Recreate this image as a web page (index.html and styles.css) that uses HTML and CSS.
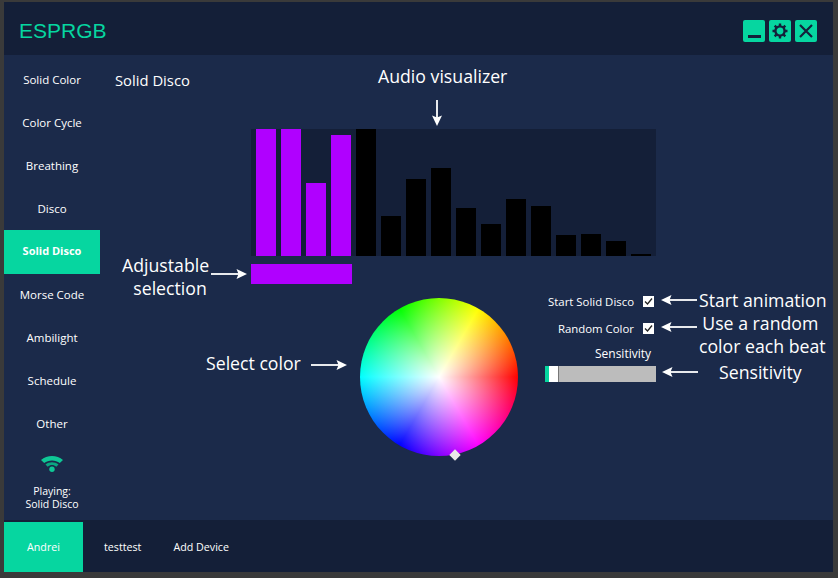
FILE: index.html
```html
<!DOCTYPE html>
<html lang="en">
<head>
  <meta charset="UTF-8" />
  <title>ESPRGB</title>
  <link rel="stylesheet" href="styles.css">
</head>
<body>
  <div class="app">
    <header class="titlebar">
      <div class="brand">ESPRGB</div>
      <div class="window-btns">
        <button class="win-btn" type="button"><svg viewBox="0 0 22 22" width="22" height="22"><rect x="5" y="15" width="13" height="3" fill="#14203a"/></svg></button>
        <button class="win-btn" type="button"><svg viewBox="0 0 22 22" width="22" height="22"><g stroke="#14203a" stroke-width="2.4" fill="none"><circle cx="11" cy="11" r="4.6"/><path d="M11 3.500v3M11 15.500v3M3.500 11h3M15.500 11h3M5.700 5.700l2.100 2.100M14.200 14.200l2.100 2.100M5.700 16.300l2.100-2.100M14.200 7.800l2.100-2.100"/></g></svg></button>
        <button class="win-btn" type="button"><svg viewBox="0 0 22 22" width="22" height="22"><path d="M5 5l12 12M17 5L5 17" stroke="#14203a" stroke-width="2.200" fill="none"/></svg></button>
      </div>
    </header>

    <div class="middle">
      <nav class="sidebar">
        <a class="nav-item">Solid Color</a>
        <a class="nav-item">Color Cycle</a>
        <a class="nav-item">Breathing</a>
        <a class="nav-item">Disco</a>
        <a class="nav-item active">Solid Disco</a>
        <a class="nav-item">Morse Code</a>
        <a class="nav-item">Ambilight</a>
        <a class="nav-item">Schedule</a>
        <a class="nav-item">Other</a>
        <div class="status">
          <svg viewBox="0 0 24 18" width="24" height="18"><path d="M1 6C7 .5 17 .5 23 6l-3.200 3C15.500 5.500 8.500 5.500 4.200 9z" fill="#0fc796"/><path d="M5.500 10.500C9 7.500 15 7.500 18.500 10.500L16.300 12.700C13.500 10.500 10.500 10.500 7.700 12.700z" fill="#0ba882"/><circle cx="12" cy="15.300" r="2.700" fill="#0fc796"/></svg>
          <p>Playing:<br>Solid Disco</p>
        </div>
      </nav>

      <main class="content">
        <h2 class="page-title">Solid Disco</h2>

        <div class="visualizer">
          <div class="bar on" style="height:127px"></div>
          <div class="bar on" style="height:127px"></div>
          <div class="bar on" style="height:73px"></div>
          <div class="bar on" style="height:121px"></div>
          <div class="bar" style="height:127px"></div>
          <div class="bar" style="height:40px"></div>
          <div class="bar" style="height:77px"></div>
          <div class="bar" style="height:88px"></div>
          <div class="bar" style="height:48px"></div>
          <div class="bar" style="height:32px"></div>
          <div class="bar" style="height:57px"></div>
          <div class="bar" style="height:50px"></div>
          <div class="bar" style="height:21px"></div>
          <div class="bar" style="height:22px"></div>
          <div class="bar" style="height:15px"></div>
          <div class="bar" style="height:2px"></div>
        </div>
        <div class="selection"></div>

        <div class="lower">
          <div class="wheel"><span class="wheel-handle"></span></div>
          <div class="controls">
            <label class="check-row">Start Solid Disco <span class="check"><svg viewBox="0 0 11 11" width="11" height="11"><path d="M2 5.500l2.500 2.500L9 2.500" stroke="#222" stroke-width="1.300" fill="none"/></svg></span></label>
            <label class="check-row">Random Color <span class="check"><svg viewBox="0 0 11 11" width="11" height="11"><path d="M2 5.500l2.500 2.500L9 2.500" stroke="#222" stroke-width="1.300" fill="none"/></svg></span></label>
            <div class="slider-label">Sensitivity</div>
            <div class="slider"><span class="slider-fill"></span><span class="slider-thumb"></span></div>
          </div>
        </div>
      </main>
    </div>

    <footer class="devices">
      <a class="device active">Andrei</a>
      <a class="device">testtest</a>
      <a class="device">Add Device</a>
    </footer>
  </div>

  <!-- annotations drawn over the screenshot -->
  <div class="note note-audio">Audio visualizer</div>
  <div class="note note-adjust">Adjustable<br><span class="nudge">selection</span></div>
  <div class="note note-select">Select color</div>
  <div class="note note-start">Start animation</div>
  <div class="note note-random">Use a random<br><span class="nudge-small">color each beat</span></div>
  <div class="note note-sens">Sensitivity</div>

  <svg class="arrow arrow-audio" viewBox="0 0 12 26" width="12" height="26"><path d="M6 0v20" stroke="#fff" stroke-width="1.800"/><path d="M1 15.500l5 2 5-2-5 10.500z" fill="#fff"/></svg>
  <svg class="arrow arrow-adjust" viewBox="0 0 36 12" width="36" height="12"><path d="M0 6h30" stroke="#fff" stroke-width="1.800"/><path d="M25.500 1l2 5-2 5L36 6z" fill="#fff"/></svg>
  <svg class="arrow arrow-select" viewBox="0 0 36 12" width="36" height="12"><path d="M0 6h30" stroke="#fff" stroke-width="1.800"/><path d="M25.500 1l2 5-2 5L36 6z" fill="#fff"/></svg>
  <svg class="arrow arrow-start" viewBox="0 0 36 12" width="36" height="12"><path d="M6 6h30" stroke="#fff" stroke-width="1.800"/><path d="M10.500 1l-2 5 2 5L0 6z" fill="#fff"/></svg>
  <svg class="arrow arrow-random" viewBox="0 0 36 12" width="36" height="12"><path d="M6 6h30" stroke="#fff" stroke-width="1.800"/><path d="M10.500 1l-2 5 2 5L0 6z" fill="#fff"/></svg>
  <svg class="arrow arrow-sens" viewBox="0 0 36 12" width="36" height="12"><path d="M6 6h30" stroke="#fff" stroke-width="1.800"/><path d="M10.500 1l-2 5 2 5L0 6z" fill="#fff"/></svg>
</body>
</html>
```

FILE: styles.css
```css
html, body {
  margin: 0;
  height: 100%;
}
body {
  background-color: #3a3a3a;
  font-family: "Open Sans", "Noto Sans", sans-serif;
  color: #fff;
  overflow: hidden;
  position: relative;
}
.app {
  margin: 2px 5px 0 4px;
  height: 570px;
  display: flex;
  flex-direction: column;
  background-color: #1b2a4a;
}

/* title bar */
.titlebar {
  height: 53px;
  box-sizing: border-box;
  background-color: #141f38;
  display: flex;
  align-items: center;
  justify-content: space-between;
  padding: 5px 16px 0 15px;
  flex-shrink: 0;
}
.brand {
  font-family: "Liberation Sans", Arial, sans-serif;
  font-size: 21px;
  color: #06d6a0;
}
.window-btns {
  display: flex;
  gap: 4px;
}
.win-btn {
  width: 22px;
  height: 22px;
  padding: 0;
  border: none;
  border-radius: 2px;
  background-color: #06d6a0;
}
.win-btn svg { display: block; }

/* middle */
.middle {
  flex: 1;
  display: flex;
  min-height: 0;
}
.sidebar {
  width: 96px;
  padding-top: 3px;
  flex-shrink: 0;
  display: flex;
  flex-direction: column;
}
.nav-item {
  height: 43px;
  display: flex;
  align-items: center;
  justify-content: center;
  font-size: 11.5px;
}
.nav-item.active {
  height: 44px;
  box-sizing: border-box;
  padding-bottom: 3px;
  margin-bottom: -1px;
  background-color: #06d6a0;
  font-weight: 700;
  font-size: 11px;
}
.status {
  text-align: center;
  font-size: 10.5px;
  line-height: 13px;
  margin-top: 9px;
}
.status svg { display: block; margin: 0 auto; }
.status p { margin: 13px 0 0; }

.content {
  flex: 1;
}
.page-title {
  margin: 0;
  padding: 14px 0 0 15px;
  height: 74px;
  box-sizing: border-box;
  font-size: 14.8px;
  font-weight: 400;
  line-height: 22px;
}

/* audio bars */
.visualizer {
  margin-left: 151px;
  width: 405px;
  height: 127px;
  box-sizing: border-box;
  padding-left: 5px;
  background-color: #141f38;
  display: flex;
  align-items: flex-end;
  gap: 5px;
}
.bar {
  width: 20px;
  background-color: #000;
}
.bar.on { background-color: #b000ff; }
.selection {
  margin: 8px 0 0 151px;
  width: 101px;
  height: 20px;
  background-color: #b000ff;
}

/* colour wheel and controls */
.lower {
  display: flex;
  margin-top: 14px;
  padding-left: 260px;
}
.wheel {
  width: 158px;
  height: 158px;
  border-radius: 50%;
  position: relative;
  background:
    radial-gradient(circle closest-side, #fff 0%, rgba(255,255,255,0) 100%),
    conic-gradient(from 90deg, #f00, #f0f, #00f, #0ff, #0f0, #ff0, #f00);
}
.wheel-handle {
  position: absolute;
  left: 91px;
  top: 153px;
  width: 8px;
  height: 8px;
  background-color: #e8e8e8;
  transform: rotate(45deg);
}
.controls {
  width: 111px;
  margin-left: 27px;
  margin-top: -10px;
  font-size: 11.4px;
}
.check-row {
  display: flex;
  align-items: center;
  justify-content: flex-end;
  gap: 9px;
  height: 27px;
  padding-right: 2px;
  white-space: nowrap;
}
.check {
  width: 11px;
  height: 11px;
  background-color: #fff;
  display: block;
}
.check svg { display: block; }
.slider-label {
  text-align: right;
  padding-right: 5px;
  margin-top: 4px;
  line-height: 15px;
  font-size: 12px;
}
.slider {
  margin-top: 5px;
  height: 16px;
  background-color: #bcbcbc;
  display: flex;
}
.slider-fill {
  width: 4px;
  background-color: #06d6a0;
}
.slider-thumb {
  width: 10px;
  box-sizing: border-box;
  background-color: #fff;
  border-right: 1px solid #777;
}

/* footer */
.devices {
  height: 50px;
  padding-top: 2px;
  background-color: #141f38;
  display: flex;
  flex-shrink: 0;
  font-size: 10.7px;
}
.device {
  display: flex;
  align-items: center;
  padding: 0 11px 1px 21px;
}
.device.active {
  width: 79px;
  box-sizing: border-box;
  padding: 0 0 1px;
  justify-content: center;
  background-color: #06d6a0;
}

/* annotations */
.note {
  position: absolute;
  font-size: 17.7px;
  line-height: 23px;
  text-align: center;
  white-space: nowrap;
}
.nudge {
  display: inline-block;
  margin-left: 9px;
}
.nudge-small {
  display: inline-block;
  margin-left: 4px;
}
.note-audio { left: 378px; top: 65px; }
.note-adjust { left: 122px; top: 254px; }
.note-select { left: 206px; top: 352px; }
.note-start { left: 699px; top: 289px; }
.note-random { left: 695px; top: 312px; }
.note-sens { left: 719px; top: 361px; }
.arrow {
  position: absolute;
}
.arrow-audio { left: 431px; top: 100px; }
.arrow-adjust { left: 211px; top: 268px; }
.arrow-select { left: 311px; top: 359px; }
.arrow-start { left: 661px; top: 294px; }
.arrow-random { left: 661px; top: 321px; }
.arrow-sens { left: 662px; top: 366px; }
```
